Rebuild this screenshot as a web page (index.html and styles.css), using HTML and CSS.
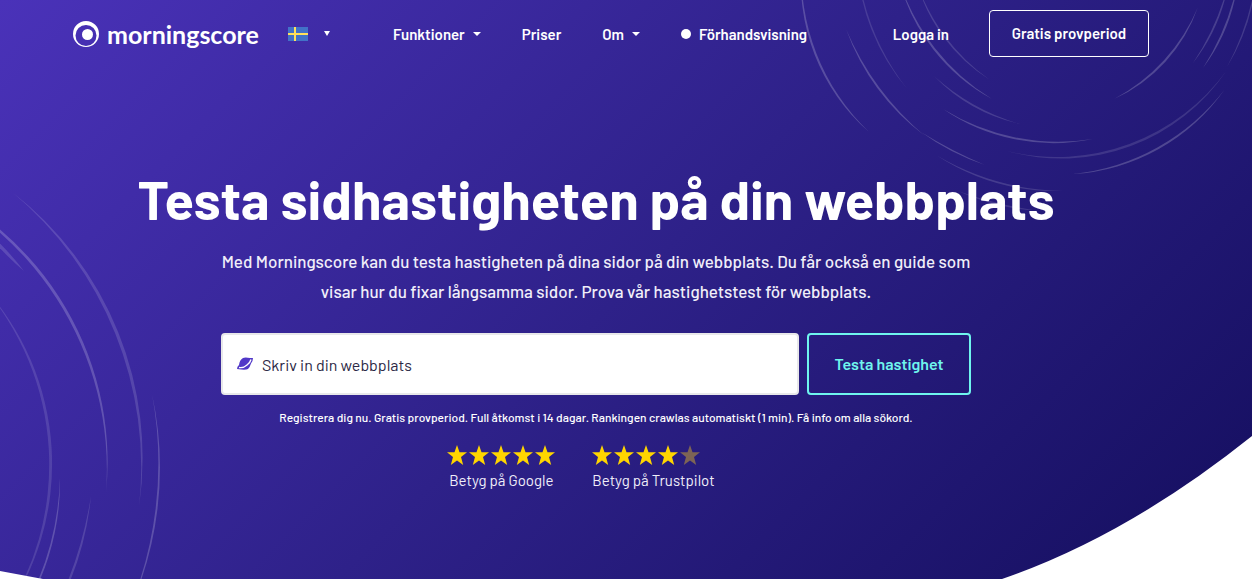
FILE: index.html
```html
<!DOCTYPE html>
<html lang="sv">
<head>
    <meta charset="UTF-8">
    <meta name="viewport" content="width=device-width, initial-scale=1.0">
    <title>Testa sidhastigheten på din webbplats</title>
    <link rel="stylesheet" href="styles.css">
</head>
<body>
    <div class="hero">
        <!-- Background rings -->
        <svg class="rings rings-left" width="200" height="400" viewBox="0 180 200 400" aria-hidden="true">
            <path d="M12 193A336 336 0 0 1 139 508A358 358 0 0 0 12 193Z" opacity=".7"/>
            <path d="M-100 174A305 305 0 0 1 106 494A316 316 0 0 0 -100 174Z"/>
            <path d="M-20 226A300 300 0 0 1 24 272A300 300 0 0 1 -20 226Z" opacity=".7"/>
            <path d="M-20 284A263 263 0 0 1 0 622A273 273 0 0 0 -20 284Z" opacity=".6"/>
            <path d="M60 479A250 250 0 0 1 12 630A290 290 0 0 0 60 479Z"/>
            <path d="M91 497A300 300 0 0 1 45 630A400 400 0 0 0 91 497Z" opacity=".7"/>
            <path d="M152 395A345 345 0 0 1 125 620A380 380 0 0 0 152 395Z"/>
        </svg>
        <svg class="rings rings-right" width="462" height="210" viewBox="790 0 462 210" aria-hidden="true">
            <path d="M802 -40A200 200 0 0 0 869 132A218 218 0 0 1 802 -40Z"/>
            <path d="M846 29A233 233 0 0 0 925 136A285 285 0 0 1 846 29Z"/>
            <path d="M921 132A233 233 0 0 0 985 165A450 450 0 0 1 921 132Z"/>
            <path d="M857 -40A210 210 0 0 0 908 90A245 245 0 0 1 857 -40Z" opacity=".6"/>
            <path d="M899 -20A190 190 0 0 0 992 99A216 216 0 0 1 899 -20Z"/>
            <path d="M916 -20A170 170 0 0 0 990 80A196 196 0 0 1 916 -20Z" opacity=".7"/>
            <path d="M934 76A170 170 0 0 0 1020 124A220 220 0 0 1 934 76Z" opacity=".7"/>
            <path d="M943 109A195 195 0 0 0 1093 139A221 221 0 0 1 943 109Z"/>
            <path d="M1007 151A199 199 0 0 0 1227 70A210 210 0 0 1 1007 151Z" opacity=".6"/>
            <path d="M1073 174A199 199 0 0 0 1225 89A219 219 0 0 1 1073 174Z"/>
            <path d="M936 155A220 220 0 0 0 1063 191A260 260 0 0 1 936 155Z" opacity=".7"/>
            <path d="M958 191A220 220 0 0 0 1040 211A400 400 0 0 1 958 191Z" opacity=".6"/>
            <path d="M1114 99A158 158 0 0 0 1198 7A185 185 0 0 1 1114 99Z"/>
            <path d="M1193 63A180 180 0 0 0 1229 -20A250 250 0 0 1 1193 63Z" opacity=".8"/>
            <path d="M1203 68A180 180 0 0 0 1238 -20A250 250 0 0 1 1203 68Z"/>
            <path d="M1227 67A200 200 0 0 0 1256 -20A280 280 0 0 1 1227 67Z" opacity=".7"/>
        </svg>
        <!-- White curve under the hero -->
        <svg class="curve curve-left" width="43" height="8" viewBox="0 0 43 8" aria-hidden="true"><path d="M0 0L43 8H0Z"/></svg>
        <svg class="curve curve-right" width="250" height="143" viewBox="0 0 250 143" aria-hidden="true"><path d="M250 0Q125 100 0 143H250Z"/></svg>

        <header class="navbar">
            <a class="logo" href="#" aria-label="morningscore">
                <svg width="26" height="26" viewBox="0 0 26 26" aria-hidden="true">
                    <path fill="#fff" fill-rule="evenodd" d="M13 0a13 13 0 1 1 0 26a13 13 0 0 1 0-26ZM13 4a10.500 10.500 0 1 0 0 21a10.500 10.500 0 0 0 0-21Z"/>
                    <circle cx="14.500" cy="13.500" r="5.500" fill="#fff"/>
                </svg>
                <span>morningscore</span>
            </a>
            <button class="language" type="button" aria-label="Svenska">
                <svg width="20" height="14" viewBox="0 0 20 14" aria-hidden="true">
                    <path fill="#4272c8" d="M0 0h20v14H0z"/>
                    <path fill="#ffe15a" d="M6 0h2v14H6zM0 6h20v2H0z"/>
                </svg>
                <svg width="6" height="5" viewBox="0 0 6 5" aria-hidden="true"><path fill="#fff" d="M0 0h6L3 5z"/></svg>
            </button>
            <nav class="menu">
                <button type="button">Funktioner <i class="caret"></i></button>
                <a href="#">Priser</a>
                <button type="button">Om <i class="caret"></i></button>
                <a href="#"><i class="dot"></i>Förhandsvisning</a>
            </nav>
            <div class="account">
                <a href="#">Logga in</a>
                <a class="trial" href="#">Gratis provperiod</a>
            </div>
        </header>

        <main class="content">
            <h1>Testa sidhastigheten på din webbplats</h1>
            <p class="lead">Med Morningscore kan du testa hastigheten på dina sidor på din webbplats. Du får också en guide som visar hur du fixar långsamma sidor. Prova vår hastighetstest för webbplats.</p>
            <form class="speed-form">
                <label class="site" for="site">
                    <svg width="16" height="14" viewBox="0 0 16 14" aria-hidden="true">
                        <path fill="#5138c8" d="M2 8Q2.500 3 6 1Q8 0 13 1L16 1Q16 4 14 6.500Q13 10 11 12Q9 13 4 12.500L0 12Q0 9.500 2 8Z"/>
                        <path d="M2 10.500Q6 11.500 10 8Q13.500 5 14 2.500" fill="none" stroke="#fff" stroke-width="1.300"/>
                    </svg>
                    <input type="text" id="site" name="site" placeholder="Skriv in din webbplats" aria-label="Skriv in din webbplats">
                </label>
                <button type="submit">Testa hastighet</button>
            </form>
            <p class="note">Registrera dig nu. Gratis provperiod. Full åtkomst i 14 dagar. Rankingen crawlas automatiskt (1 min). Få info om alla sökord.</p>

            <svg class="defs" width="0" height="0" aria-hidden="true">
                <symbol id="star" viewBox="0 0 20 20"><path d="M10 0L12.500 7.300H20L14 12L16.200 20L10 15.400L3.800 20L6 12L0 7.300H7.500Z"/></symbol>
            </svg>
            <div class="ratings">
                <div class="rating">
                    <div class="stars">
                        <svg><use href="#star"/></svg><svg><use href="#star"/></svg><svg><use href="#star"/></svg><svg><use href="#star"/></svg><svg><use href="#star"/></svg>
                    </div>
                    <span>Betyg på Google</span>
                </div>
                <div class="rating">
                    <div class="stars">
                        <svg><use href="#star"/></svg><svg><use href="#star"/></svg><svg><use href="#star"/></svg><svg><use href="#star"/></svg><svg class="off"><use href="#star"/></svg>
                    </div>
                    <span>Betyg på Trustpilot</span>
                </div>
            </div>
        </main>
    </div>
</body>
</html>
```
FILE: styles.css
```css
* {
    box-sizing: border-box;
}
body {
    font-family: Barlow, Roboto, sans-serif;
    font-size: 16px;
    margin: 0;
    color: #fff;
}
a {
    color: #fff;
    text-decoration: none;
}
button, input {
    font: inherit;
}
button {
    background: none;
    border: none;
    padding: 0;
    color: #fff;
    cursor: pointer;
}
h1, p {
    margin: 0;
}

.hero {
    position: relative;
    min-height: 100vh;
    overflow: hidden;
    background: linear-gradient(135deg, #4a32b9 0%, #2e2189 50%, #140e5e 100%);
}
.rings, .curve {
    position: absolute;
}
.rings {
    fill: rgba(255, 255, 255, 0.2);
}
.rings-left {
    left: 0;
    bottom: 0;
}
.rings-right {
    right: 0;
    top: 0;
}
.curve {
    bottom: 0;
    fill: #fff;
}
.curve-left {
    left: 0;
}
.curve-right {
    right: 0;
}

/* Navigation */
.navbar {
    position: relative;
    display: flex;
    align-items: center;
    padding: 10px 103px 0 73px;
    font-size: 15px;
    font-weight: 600;
}
.logo {
    display: flex;
    align-items: center;
    gap: 8px;
    width: 183px;
    font-family: Lato, sans-serif;
    font-size: 25px;
    font-weight: 700;
    line-height: 26px;
}
.logo svg {
    flex: none;
}
.language {
    display: flex;
    align-items: center;
    gap: 16px;
    margin-left: 32px;
}
.menu {
    display: flex;
    align-items: center;
    gap: 41px;
    margin-left: 63px;
}
.menu a, .menu button {
    display: flex;
    align-items: center;
    gap: 8px;
}
.caret {
    border: 4px solid transparent;
    border-top-color: #fff;
    border-bottom: 0;
}
.dot {
    width: 10px;
    height: 10px;
    border-radius: 50%;
    background-color: #fff;
}
.account {
    display: flex;
    align-items: center;
    gap: 40px;
    margin-left: auto;
}
.trial {
    width: 160px;
    border: 1px solid #fff;
    border-radius: 4px;
    line-height: 45px;
    text-align: center;
}

/* Hero content */
.content {
    position: relative;
    padding: 110px 60px 0 0;
    text-align: center;
}
h1 {
    font-size: 54px;
    font-weight: 700;
    line-height: 64px;
}
.lead {
    max-width: 770px;
    margin: 15px auto 0;
    color: #f0eef9;
    font-size: 17px;
    font-weight: 500;
    line-height: 30px;
}
.speed-form {
    display: flex;
    gap: 8px;
    max-width: 750px;
    margin: 27px auto 0;
}
.site {
    flex: 1;
    display: flex;
    align-items: center;
    gap: 9px;
    height: 62px;
    padding: 0 14px;
    background-color: #fff;
    border: 2px solid #e8e8ea;
    border-radius: 4px;
}
.site input {
    flex: 1;
    padding: 0;
    border: none;
    outline: none;
    color: #2b2845;
}
.site input::placeholder {
    color: #2b2845;
}
.speed-form button {
    width: 164px;
    padding-bottom: 2px;
    border: 2px solid #6ff5ee;
    border-radius: 4px;
    color: #6ff5ee;
    font-weight: 600;
}
.note {
    margin-top: 13px;
    font-size: 12px;
    font-weight: 500;
    line-height: 18px;
}
.defs {
    position: absolute;
}
.ratings {
    display: flex;
    justify-content: center;
    gap: 37px;
    margin-top: 19px;
    padding-right: 30px;
    color: #f0eef9;
    font-size: 15px;
    font-weight: 400;
}
.rating {
    line-height: 30px;
}
.stars {
    display: flex;
    gap: 2px;
}
.stars svg {
    width: 20px;
    height: 20px;
    fill: #ffd500;
}
.stars .off {
    fill: #7d6455;
}
```
